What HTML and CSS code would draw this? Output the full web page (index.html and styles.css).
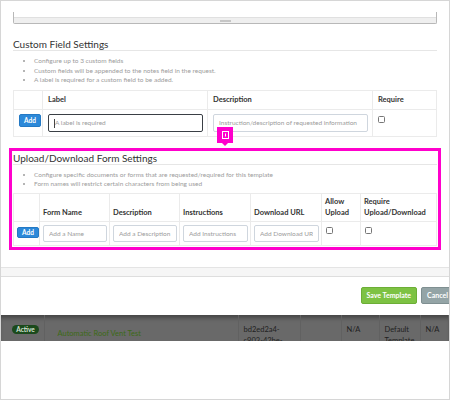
FILE: index.html
```html
<!DOCTYPE html>
<html lang="en">
<head>
    <meta charset="UTF-8">
    <meta name="viewport" content="width=device-width, initial-scale=1.0">
    <title>Template Settings</title>
    <link rel="stylesheet" href="styles.css">
</head>
<body>
<div class="frame">
    <div class="modal-body">
        <!-- bottom of the notes editor, with its resize grip -->
        <div class="editor">
            <div class="editor-status"><span class="grip"></span></div>
        </div>

        <section class="settings">
            <h3 class="section-title">Custom Field Settings</h3>
            <ul class="notes">
                <li>Configure up to 3 custom fields</li>
                <li>Custom fields will be appended to the notes field in the request.</li>
                <li>A label is required for a custom field to be added.</li>
            </ul>
            <table class="grid-table custom-fields">
                <colgroup>
                    <col style="width:29px">
                    <col style="width:165px">
                    <col style="width:165px">
                    <col>
                </colgroup>
                <thead>
                    <tr>
                        <th></th>
                        <th>Label</th>
                        <th>Description</th>
                        <th>Require</th>
                    </tr>
                </thead>
                <tbody>
                    <tr>
                        <td><button class="btn-add">Add</button></td>
                        <td><input class="field field-active" type="text" placeholder="A label is required"></td>
                        <td><input class="field" type="text" placeholder="Instruction/description of requested information"></td>
                        <td><input class="check" type="checkbox"></td>
                    </tr>
                </tbody>
            </table>
        </section>

        <section class="settings highlighted">
            <span class="inspect-tag">
                <svg width="7" height="8" viewBox="0 0 7 8">
                    <rect x="0.5" y="0.5" width="6" height="7" fill="none" stroke="#fff" stroke-width="1"/>
                    <line x1="3.5" y1="2.5" x2="3.5" y2="5.5" stroke="#fff" stroke-width="1"/>
                </svg>
            </span>
            <h3 class="section-title">Upload/Download Form Settings</h3>
            <ul class="notes">
                <li>Configure specific documents or forms that are requested/required for this template</li>
                <li>Form names will restrict certain characters from being used</li>
            </ul>
            <table class="grid-table forms">
                <colgroup>
                    <col style="width:26px">
                    <col style="width:70px">
                    <col style="width:70px">
                    <col style="width:71px">
                    <col style="width:71px">
                    <col style="width:39px">
                    <col>
                </colgroup>
                <thead>
                    <tr>
                        <th></th>
                        <th>Form Name</th>
                        <th>Description</th>
                        <th>Instructions</th>
                        <th>Download URL</th>
                        <th>Allow<br>Upload</th>
                        <th>Require<br>Upload/Download</th>
                    </tr>
                </thead>
                <tbody>
                    <tr>
                        <td><button class="btn-add">Add</button></td>
                        <td><input class="field" type="text" placeholder="Add a Name"></td>
                        <td><input class="field" type="text" placeholder="Add a Description"></td>
                        <td><input class="field" type="text" placeholder="Add Instructions"></td>
                        <td><input class="field" type="text" placeholder="Add Download URL"></td>
                        <td><input class="check" type="checkbox"></td>
                        <td><input class="check" type="checkbox"></td>
                    </tr>
                </tbody>
            </table>
        </section>
    </div>

    <div class="modal-divider"></div>

    <div class="modal-footer">
        <div class="footer-actions">
            <button class="btn btn-save">Save Template</button>
            <button class="btn btn-cancel">Cancel</button>
        </div>
    </div>

    <!-- template list behind the dialog -->
    <div class="backdrop">
        <table class="backdrop-table">
            <colgroup>
                <col style="width:43px">
                <col style="width:194px">
                <col style="width:62px">
                <col style="width:41px">
                <col style="width:38px">
                <col style="width:41px">
                <col>
            </colgroup>
            <tr>
                <td class="cell-status"><span class="badge">Active</span></td>
                <td class="cell-name">Automatic Roof Vent Test</td>
                <td>bd2ed2a4-c903-42be-9f1e-7a0c</td>
                <td></td>
                <td>N/A</td>
                <td>Default Template</td>
                <td>N/A</td>
            </tr>
        </table>
    </div>
</div>
</body>
</html>
```

FILE: styles.css
```css
body {
    margin: 0;
    font-family: Lato, "Open Sans", sans-serif;
    color: #333;
    background-color: #fff;
}
.frame {
    width: 450px;
    height: 400px;
    box-sizing: border-box;
    border: 1px solid #d6d6d6;
    overflow: hidden;
    background-color: #fff;
}
.modal-body {
    padding: 0 12px 21px 12px;
}

/* editor */
.editor {
    margin-top: 11px;
    height: 12px;
    box-sizing: border-box;
    border: 1px solid #b8b8b8;
    border-top: none;
    border-radius: 0 0 2px 2px;
    display: flex;
    flex-direction: column;
    justify-content: flex-end;
}
.editor-status {
    height: 5px;
    background-color: #efefef;
    border-top: 1px solid #e0e0e0;
    display: flex;
    align-items: center;
    justify-content: center;
}
.grip {
    width: 11px;
    height: 2px;
    background-color: #c6c6c6;
}

/* sections */
.section-title {
    margin: 14px 0 0;
    font-size: 10px;
    line-height: 12px;
    font-weight: 400;
    color: #333;
    border-bottom: 1px solid #e6e6e6;
}
.notes {
    margin: 5px 0 0;
    padding-left: 21px;
    font-size: 6.5px;
    line-height: 9.5px;
    color: #9c9c9c;
}
.highlighted {
    position: relative;
    margin-top: 15px;
    outline: 3px solid #ff00cc;
    outline-offset: 1px;
}
.highlighted .section-title {
    margin-top: 0;
}
.inspect-tag {
    position: absolute;
    top: -25px;
    left: 204px;
    width: 16px;
    height: 16px;
    background-color: #ff00cc;
    display: flex;
    align-items: center;
    justify-content: center;
}
.inspect-tag::after {
    content: "";
    position: absolute;
    left: 5px;
    bottom: -3px;
    border-left: 3px solid transparent;
    border-right: 3px solid transparent;
    border-top: 3px solid #ff00cc;
}

/* tables */
.grid-table {
    width: 100%;
    margin-top: 5px;
    border-collapse: collapse;
    table-layout: fixed;
}
.grid-table th,
.grid-table td {
    border: 1px solid #ebebeb;
    text-align: left;
}
.grid-table th {
    font-size: 7.5px;
    line-height: 11px;
    font-weight: 700;
    color: #333;
    vertical-align: bottom;
}
.grid-table td {
    vertical-align: top;
    font-size: 7px;
    line-height: 10px;
}
.custom-fields th {
    height: 14px;
    padding: 0 5px 4px;
}
.custom-fields td {
    padding: 4px 4px 4px 5px;
}
.forms {
    margin-top: 4px;
}
.forms th {
    height: 24px;
    padding: 0 3px 3px;
}
.forms td {
    padding: 3px 2px 3px 3px;
}
.forms td:nth-child(n+6) {
    padding-left: 4px;
}

.btn-add {
    display: block;
    height: 13px;
    padding: 0 4px;
    border: 1px solid #2479c4;
    border-radius: 2px;
    background-color: #2c89d9;
    color: #fff;
    font-family: Lato, sans-serif;
    font-size: 6.5px;
    font-weight: 700;
    line-height: 11px;
}
.forms .btn-add {
    height: 11px;
    line-height: 9px;
    margin-top: 2px;
}
.field {
    display: block;
    width: 100%;
    height: 18px;
    box-sizing: border-box;
    padding: 0 5px;
    border: 1px solid #cfd6de;
    border-radius: 2px;
    font-family: Lato, sans-serif;
    font-size: 6.5px;
    color: #555;
    background-color: #fff;
}
.forms .field {
    height: 17px;
}
.field::placeholder {
    color: #9b9b9b;
}
.field-active {
    border-color: #3a3f45;
    padding-left: 6px;
    /* text caret */
    background: #fff linear-gradient(#444, #444) no-repeat 5px 4px / 1px 9px;
}
.check {
    appearance: none;
    display: block;
    width: 7px;
    height: 7px;
    margin: 2px 0 0;
    border: 1px solid #777;
    border-radius: 1.5px;
    background-color: #fff;
}

/* footer */
.modal-divider {
    height: 8px;
    background-color: #f6f6f6;
    border-top: 1px solid #e4e4e4;
    border-bottom: 1px solid #dedede;
}
.modal-footer {
    display: flex;
    justify-content: flex-end;
    padding: 10px 0 11px;
}
.footer-actions {
    display: flex;
    gap: 4px;
    margin-right: -5px;
}
.btn {
    height: 17px;
    padding: 0 5px;
    border-radius: 2px;
    color: #fff;
    font-family: Lato, sans-serif;
    font-size: 7px;
    font-weight: 700;
    line-height: 15px;
}
.btn-save {
    background-color: #7dc243;
    border: 1px solid #6cae36;
}
.btn-cancel {
    background-color: #94a4a6;
    border: 1px solid #7f8f91;
}

/* list behind the overlay */
.backdrop {
    height: 26px;
    overflow: hidden;
    background-color: #696969;
    box-shadow: inset 0 5px 4px -2px rgba(0, 0, 0, 0.35);
}
.backdrop-table {
    width: 100%;
    border-collapse: collapse;
    table-layout: fixed;
}
.backdrop-table td {
    padding: 9px 3px 0 5px;
    vertical-align: top;
    font-size: 7.5px;
    line-height: 11px;
    color: #1f1f1f;
    border-right: 1px solid #616161;
}
.backdrop-table .cell-status {
    padding: 10px 0 0 11px;
}
.backdrop-table .cell-name {
    padding: 13px 0 0 13px;
    color: #3c6a17;
}
.badge {
    display: inline-block;
    width: 27px;
    height: 9px;
    border-radius: 5px;
    background-color: #1b4a1c;
    color: #d5e3d5;
    font-size: 6.5px;
    font-weight: 700;
    line-height: 9px;
    text-align: center;
    vertical-align: top;
}
```
